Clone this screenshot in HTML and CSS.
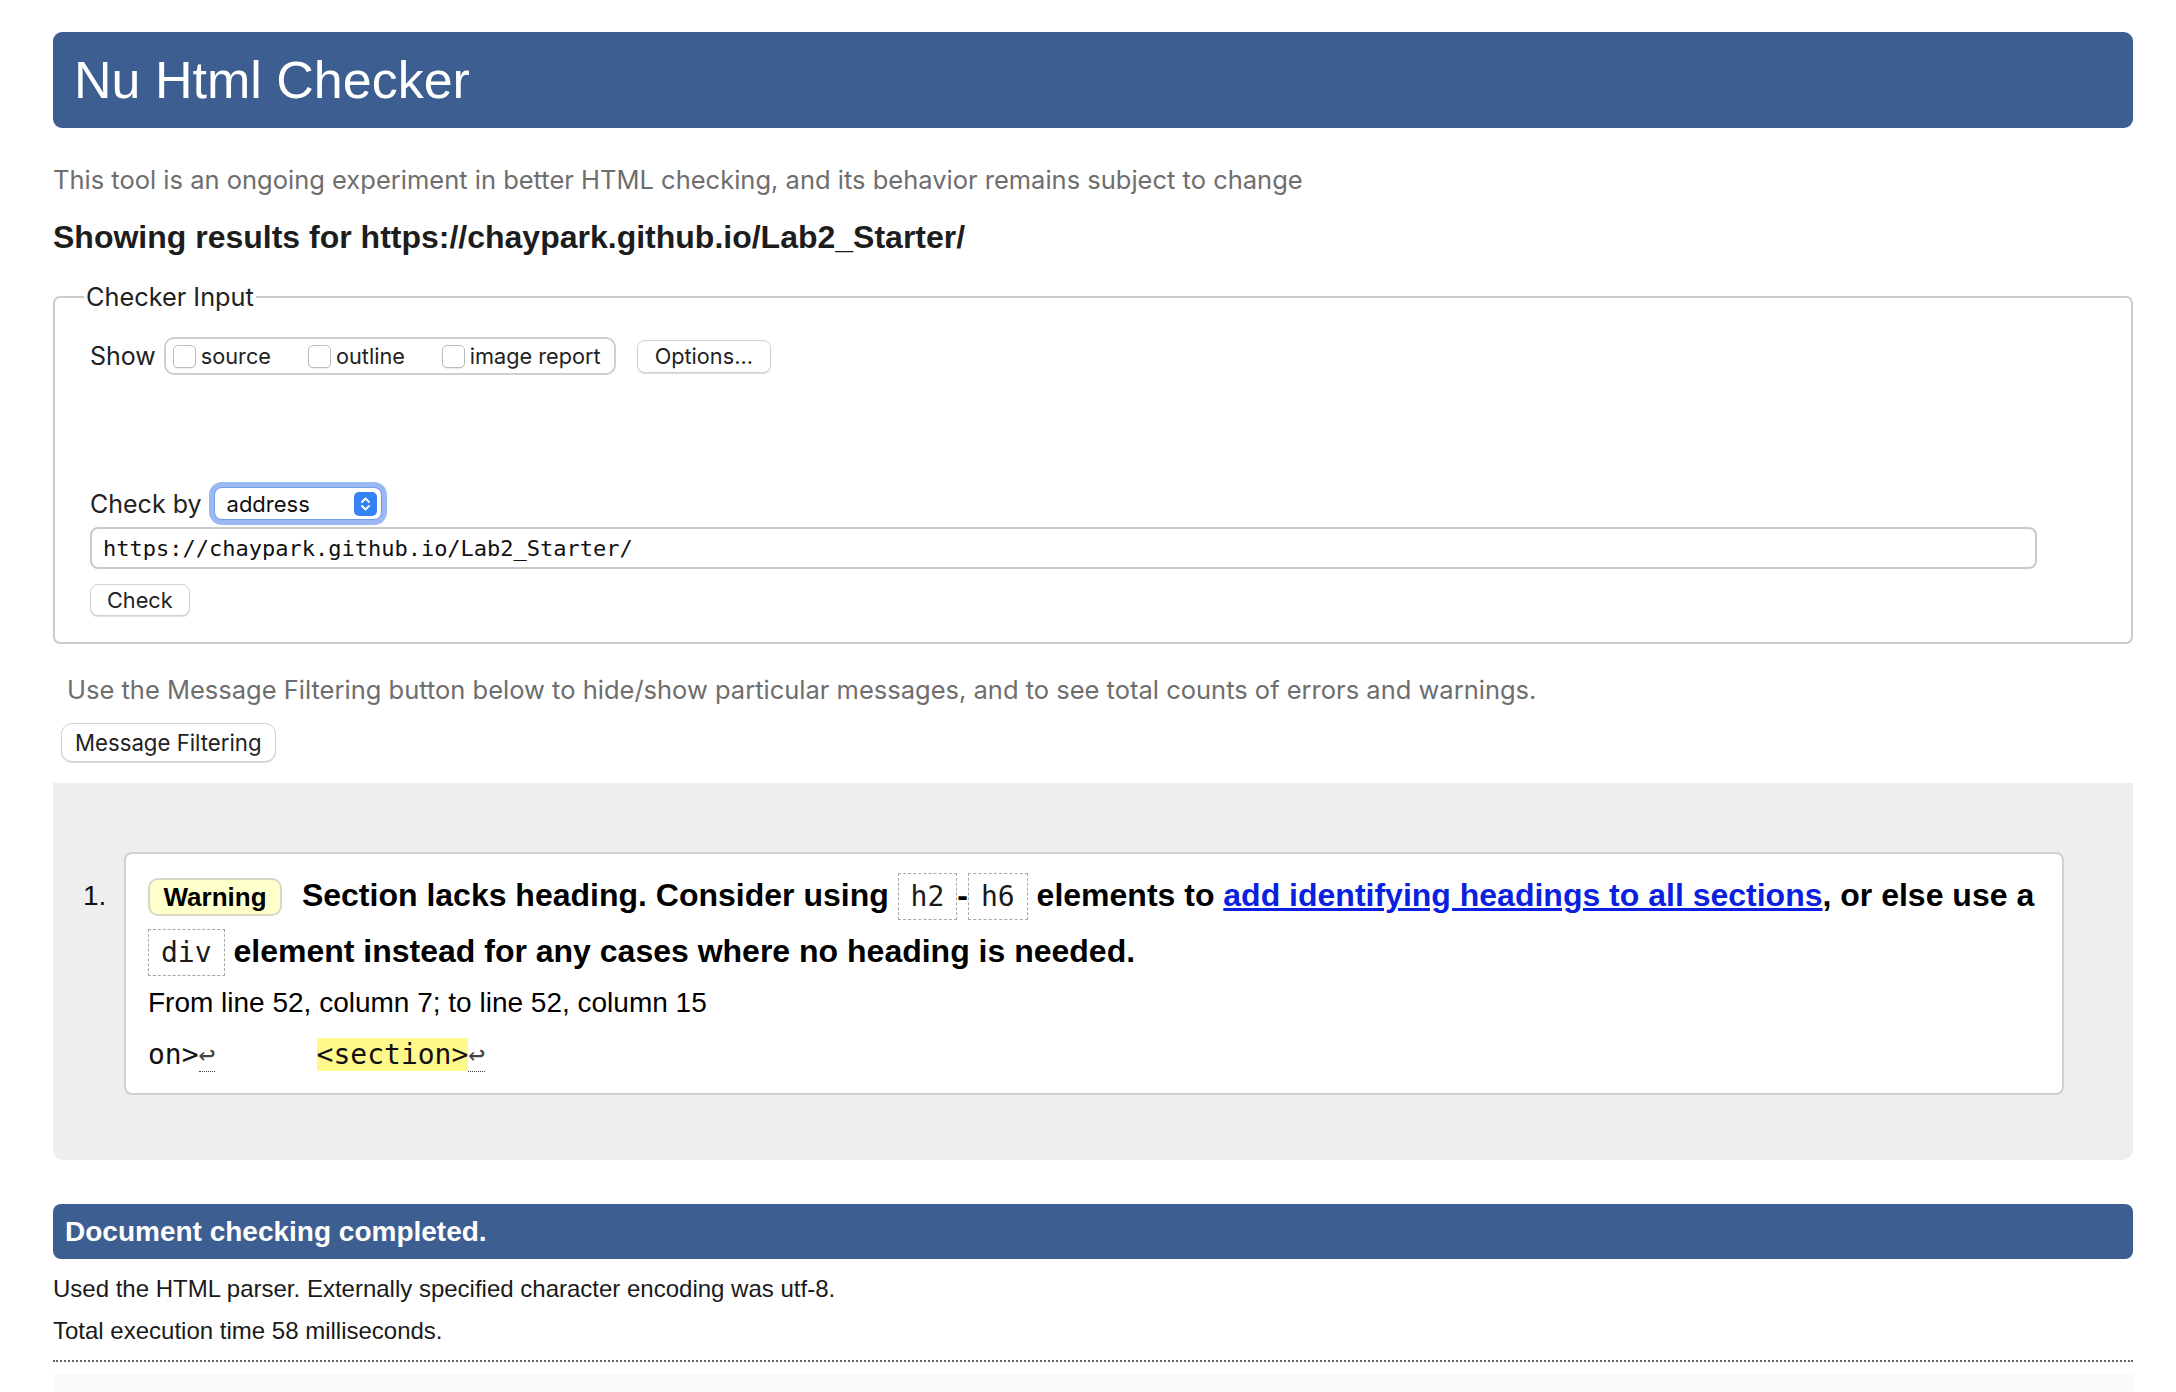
FILE: index.html
```html
<!DOCTYPE html>
<html lang="en">
<head>
<meta charset="utf-8">
<title>Showing results for https://chaypark.github.io/Lab2_Starter/ - Nu Html Checker</title>
<link rel="stylesheet" href="styles.css">
</head>
<body>
<h1 class="masthead">Nu Html Checker</h1>
<p class="about">This tool is an ongoing experiment in better HTML checking, and its behavior remains subject to change</p>
<p class="results-for">Showing results for https://chaypark.github.io/Lab2_Starter/</p>

<form class="checker-form">
  <fieldset class="checker-input">
    <legend class="checker-legend">Checker Input</legend>
    <div class="form-body">
      <div class="show-row">
        <span class="row-label show-label">Show</span>
        <div class="show-group">
          <label class="opt"><input type="checkbox" class="checkbox">source</label>
          <label class="opt"><input type="checkbox" class="checkbox">outline</label>
          <label class="opt"><input type="checkbox" class="checkbox">image report</label>
        </div>
        <button type="button" class="btn options-btn">Options...</button>
      </div>
      <div class="checkby-row">
        <span class="row-label checkby-label">Check by</span>
        <div class="select-wrap">
          <select class="select"><option>address</option></select>
          <span class="stepper"><svg width="23" height="24" viewBox="0 0 23 24"><rect x="0" y="0" width="23" height="24" rx="5" fill="#3581f6"/><path d="M8 10 L11.5 6.5 L15 10" stroke="#fff" stroke-width="1.8" fill="none" stroke-linecap="round" stroke-linejoin="round"/><path d="M8 14 L11.5 17.5 L15 14" stroke="#fff" stroke-width="1.8" fill="none" stroke-linecap="round" stroke-linejoin="round"/></svg></span>
        </div>
      </div>
      <input class="url-input" type="url" value="https://chaypark.github.io/Lab2_Starter/">
      <button type="button" class="btn check-btn">Check</button>
    </div>
  </fieldset>
</form>

<p class="filter-note">Use the Message Filtering button below to hide/show particular messages, and to see total counts of errors and warnings.</p>
<button type="button" class="btn filter-btn">Message Filtering</button>

<div class="results">
  <ol class="messages">
    <li class="message">
      <span class="num">1.</span>
      <div class="msg-box">
        <p class="msg-title"><strong class="badge">Warning</strong> <span>Section lacks heading. Consider using <code>h2</code>-<code>h6</code> elements to <a href="#" class="msg-link">add identifying headings to all sections</a>, or else use a <code>div</code> element instead for any cases where no heading is needed.</span></p>
        <p class="location">From line 52, column 7; to line 52, column 15</p>
        <p class="extract">on&gt;<span class="lf">↩</span>      <b class="hl">&lt;section&gt;</b><span class="lf">↩</span></p>
      </div>
    </li>
  </ol>
</div>

<h2 class="done">Document checking completed.</h2>
<p class="stats">Used the HTML parser. Externally specified character encoding was utf-8.</p>
<p class="stats stats-time">Total execution time 58 milliseconds.</p>
<hr class="dotted">
<div class="footer-band"></div>
</body>
</html>
```

FILE: styles.css
```css
html {
  background: #fff;
}

body {
  margin: 0;
  padding: 32px 43px 0 53px;
  font-family: "Liberation Sans", Arial, Helvetica, sans-serif;
  color: #000;
}

.masthead {
  margin: 0;
  height: 96px;
  line-height: 96px;
  padding-left: 21px;
  background: #3d5e91;
  color: #fff;
  font-size: 52px;
  font-weight: normal;
  border-radius: 9px;
}

.about {
  margin: 34px 0 0;
  font-family: Inter, "Noto Sans", sans-serif;
  font-size: 25.5px;
  line-height: 36px;
  color: #6e6e6e;
}

.results-for {
  margin: 19px 0 0;
  font-size: 32px;
  line-height: 40px;
  font-weight: bold;
  color: #1d1d1d;
}

.checker-form {
  margin: 0;
}

.checker-input {
  margin: 24px 0 0;
  padding: 0;
  border: 2px solid #cbcbcb;
  border-radius: 7px;
  min-width: 0;
}

.checker-legend {
  margin-left: 29px;
  padding: 0 2px;
  font-family: Inter, "Noto Sans", sans-serif;
  font-size: 25.3px;
  line-height: 32px;
  color: #222;
}

.form-body {
  padding: 24px 35px 26px;
}

.row-label {
  font-family: Inter, "Noto Sans", sans-serif;
  font-size: 25px;
  color: #222;
}

.show-row {
  display: flex;
  align-items: center;
}

.show-label {
  margin-right: 8px;
}

.show-group {
  display: flex;
  align-items: center;
  height: 38px;
  box-sizing: border-box;
  border: 2px solid #cfcfcf;
  border-radius: 10px;
  padding: 0 13px 0 7px;
}

.opt {
  display: flex;
  align-items: center;
  font-family: Inter, "Noto Sans", sans-serif;
  font-size: 21.7px;
  color: #222;
}

.opt + .opt {
  margin-left: 37px;
}

.checkbox {
  appearance: none;
  -webkit-appearance: none;
  width: 23px;
  height: 23px;
  margin: 0 5px 0 0;
  border: 1px solid #bcbcbc;
  border-radius: 5px;
  background: #fff;
  box-shadow: 0 1px 1px rgba(0, 0, 0, 0.08);
}

.btn {
  appearance: none;
  -webkit-appearance: none;
  box-sizing: border-box;
  background: #fff;
  border: 1px solid #d2d2d2;
  border-radius: 8px;
  box-shadow: 0 1px 1px rgba(0, 0, 0, 0.14);
  font-family: Inter, "Noto Sans", sans-serif;
  font-size: 21.7px;
  color: #222;
  cursor: default;
}

.options-btn {
  margin-left: 21px;
  height: 33px;
  padding: 0 17px;
}

.checkby-row {
  display: flex;
  align-items: center;
  margin-top: 112px;
}

.checkby-label {
  margin-right: 12px;
}

.select-wrap {
  display: flex;
  align-items: center;
  box-sizing: border-box;
  width: 168px;
  height: 33px;
  padding: 0 4px 0 0;
  background: #fff;
  border: 1px solid #6f9ded;
  border-radius: 8px;
  box-shadow: 0 0 0 5px #9ab9f2;
}

.select {
  appearance: none;
  -webkit-appearance: none;
  flex: 1;
  min-width: 0;
  border: 0;
  background: transparent;
  padding: 0 0 0 12px;
  font-family: Inter, "Noto Sans", sans-serif;
  font-size: 22px;
  color: #111;
  outline: none;
}

.stepper {
  display: flex;
}

.url-input {
  display: block;
  box-sizing: border-box;
  width: 1947px;
  height: 42px;
  margin-top: 7px;
  padding: 0 11px;
  border: 2px solid #cacaca;
  border-radius: 8px;
  font-family: "DejaVu Sans Mono", "Liberation Mono", monospace;
  font-size: 22px;
  color: #111;
  background: #fff;
  outline: none;
}

.check-btn {
  display: block;
  margin-top: 15px;
  height: 32px;
  padding: 0 16px;
}

.filter-note {
  margin: 29px 0 0 14px;
  font-family: Inter, "Noto Sans", sans-serif;
  font-size: 25.5px;
  line-height: 34px;
  color: #6e6e6e;
}

.filter-btn {
  display: block;
  margin: 16px 0 0 8px;
  height: 39px;
  padding: 0 13px;
  border-radius: 11px;
  border-color: #cfcfcf;
  font-size: 22.2px;
}

.results {
  margin-top: 21px;
  padding: 69px 69px 65px 30px;
  background: #eee;
  border-radius: 0 0 10px 10px;
}

.messages {
  margin: 0;
  padding: 0;
  list-style: none;
}

.message {
  display: grid;
  grid-template-columns: 41px 1fr;
  align-items: start;
}

.num {
  padding-top: 16px;
  font-size: 28px;
  line-height: 56px;
  color: #111;
}

.msg-box {
  background: #fff;
  border: 2px solid #d0d0d0;
  border-radius: 8px;
  padding: 13px 22px 18px;
}

.msg-title {
  margin: 0;
  font-size: 32px;
  line-height: 56px;
  font-weight: bold;
}

.badge {
  display: inline-block;
  margin-right: 11px;
  padding: 0 13.5px;
  font-size: 26px;
  line-height: 34px;
  background: #ffffcc;
  border: 2px solid #d8d8c4;
  border-radius: 10px;
}

.msg-title code {
  display: inline-block;
  padding: 0 12px;
  border: 1.5px dashed #a8a8a8;
  font-family: "DejaVu Sans Mono", "Liberation Mono", monospace;
  font-size: 28px;
  line-height: 45px;
  font-weight: normal;
  color: #1a1a1a;
}

.msg-link {
  color: #0b1fe0;
  text-decoration: underline;
}

.location {
  margin: 4px 0 0;
  font-size: 28px;
  line-height: 40px;
}

.extract {
  margin: 12px 0 0;
  font-family: "DejaVu Sans Mono", "Liberation Mono", monospace;
  font-size: 28px;
  line-height: 40px;
  white-space: pre;
  color: #111;
}

.hl {
  font-weight: normal;
  background: #fff98c;
}

.lf {
  color: #444;
  border-bottom: 1px dotted #444;
}

.done {
  margin: 44px 0 0;
  height: 55px;
  line-height: 55px;
  padding-left: 12px;
  background: #3d5e91;
  color: #fff;
  font-size: 28px;
  font-weight: bold;
  border-radius: 8px;
}

.stats {
  margin: 14px 0 0;
  font-size: 24px;
  line-height: 32px;
  color: #1a1a1a;
}

.stats-time {
  margin-top: 10px;
}

.dotted {
  margin: 13px 0 0;
  height: 0;
  border: 0;
  border-top: 2px dotted #666;
}

.footer-band {
  margin-top: 12px;
  height: 40px;
  background: #fafafa;
}
```
